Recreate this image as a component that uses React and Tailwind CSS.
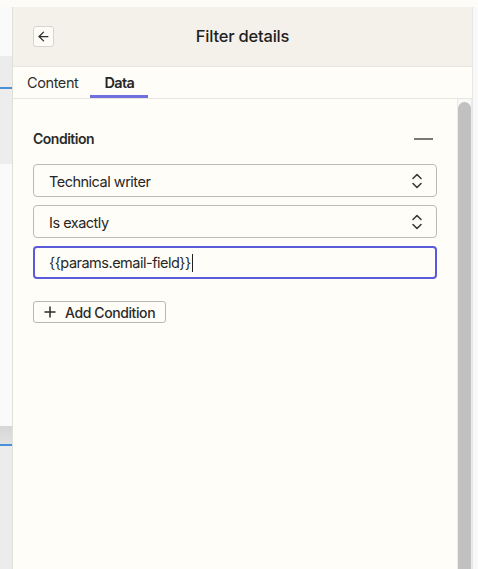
import React from "react";

function UpDown() {
  return (
    <svg width="14" height="20" viewBox="0 0 14 20" fill="none" stroke="#3a3a3a" strokeWidth="1.6" strokeLinecap="round" strokeLinejoin="round">
      <path d="M3 7.5 7 3.5l4 4" />
      <path d="M3 12.5 7 16.5l4-4" />
    </svg>
  );
}

function Select({ value }) {
  return (
    <div className="flex h-[33px] items-center justify-between rounded-[4px] border border-[#bdbbb5] bg-[#fffdf7] pl-[15px] pr-[12px] text-[14.5px] leading-[20px] tracking-[-0.5px] text-[#262626]">
      <span className="pt-[2px]">{value}</span>
      <UpDown />
    </div>
  );
}

export default function App() {
  return (
    <div className="flex h-[569px] w-[478px] flex-col overflow-hidden bg-[#fdfcf8] font-['Inter',_sans-serif]">
      <div className="h-[7px] shrink-0 bg-[#fdfcf8]" />
      <div className="flex min-h-0 flex-1">
        {/* left background strip */}
        <div className="flex w-[13px] shrink-0 flex-col border-r border-[#e2e0da]">
          <div className="h-[49px] bg-[#fafafa]" />
          <div className="h-[31px] bg-[#ececec]" />
          <div className="h-[2px] bg-[#4a90d9]" />
          <div className="h-[75px] bg-[#ededed]" />
          <div className="h-[262px] bg-[#fafafa]" />
          <div className="h-[18px] bg-gradient-to-b from-[#d6d6d6] to-[#e2e2e2]" />
          <div className="h-[2px] bg-[#4a90d9]" />
          <div className="flex-1 bg-[#ececec]" />
        </div>

        {/* panel */}
        <div className="flex min-w-0 flex-1 flex-col">
          <div className="relative flex h-[60px] shrink-0 items-center justify-center border-b border-[#e8e6df] bg-[#f3f1ea]">
            <button className="absolute left-[20px] top-[19px] flex h-[21px] w-[21px] items-center justify-center rounded-[3px] border border-[#d6d4cd] bg-[#fcfbf6]">
              <svg width="15" height="15" viewBox="0 0 24 24" fill="none" stroke="#2b2b2b" strokeWidth="2" strokeLinecap="round" strokeLinejoin="round">
                <path d="M19 12H5" />
                <path d="m12 19-7-7 7-7" />
              </svg>
            </button>
            <h1 className="text-[16.5px] font-medium tracking-[-0.2px] text-[#1f1f1f]">Filter details</h1>
          </div>
          <div className="flex h-[32px] shrink-0 items-stretch border-b border-[#e8e6df] bg-[#fffdf7] pl-[14px] text-[14.5px] tracking-[-0.4px]">
            <div className="mr-[12px] flex items-center text-[#2e2e2e]">Content</div>
            <div className="flex items-center border-b-[3px] border-[#6f6fe0] px-[14px] pt-[3px] font-semibold tracking-[-0.6px] text-[#262626]">Data</div>
          </div>
          <div className="flex min-h-0 flex-1">
            <div className="flex-1 bg-[#fffdf7] px-[20px] pt-[30px]">
              <div className="flex items-center justify-between">
                <span className="text-[14px] leading-[20px] font-semibold tracking-[-0.5px] text-[#2b2b2b]">Condition</span>
                <span className="mr-[4px] h-[2px] w-[19px] bg-[#7a7873]" />
              </div>
              <div className="mt-[15px] flex flex-col gap-[8px]">
                <Select value="Technical writer" />
                <Select value="Is exactly" />
                <div className="flex h-[33px] items-center rounded-[4px] border-2 border-[#5a5adb] bg-[#fffdf7] pl-[14px] text-[14.5px] leading-[20px] tracking-[-0.5px] text-[#262626]">
                  <span>{"{{params.email-field}}"}</span>
                  <span className="ml-[1px] h-[18px] w-[1px] bg-[#222]" />
                </div>
              </div>
              <button className="mt-[22px] flex h-[22px] items-center gap-[9px] rounded-[3px] border border-[#b9b7b1] bg-[#fffdf7] pl-[10px] pr-[10px] text-[14px] font-medium tracking-[-0.4px] text-[#2b2b2b]">
                <svg width="12" height="12" viewBox="0 0 12 12" stroke="#2b2b2b" strokeWidth="1.5" strokeLinecap="round">
                  <path d="M6 1v10M1 6h10" />
                </svg>
                Add Condition
              </button>
            </div>
            <div className="flex w-[15px] shrink-0 justify-center border-x border-[#ecebe8] bg-[#f8f8f6] pt-[3px]">
              <div className="w-[8px] flex-1 rounded-t-full bg-[#c1c1c1]" />
            </div>
          </div>
        </div>

        {/* right strip */}
        <div className="w-[6px] shrink-0 border-l border-[#e6e6e6] bg-[#f8f8f8]" />
      </div>
    </div>
  );
}
